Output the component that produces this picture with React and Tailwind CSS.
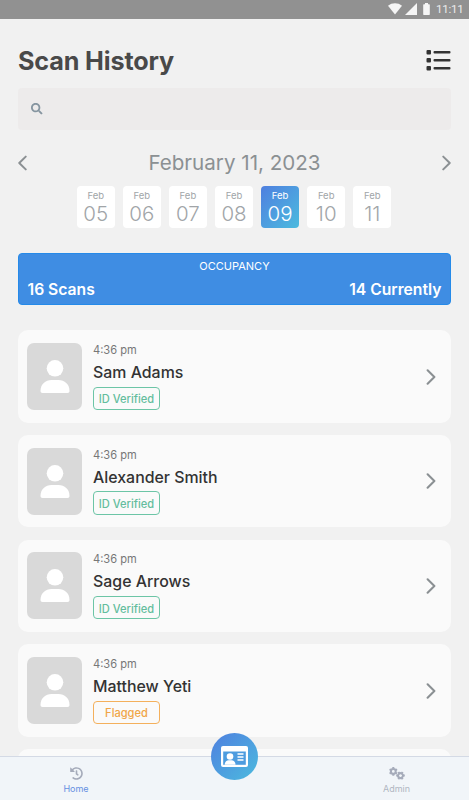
import React from "react";
import { FaSearch, FaHistory } from "react-icons/fa";

const days = ["05", "06", "07", "08", "09", "10", "11"];

const scans = [
  { name: "Sam Adams", flagged: false },
  { name: "Alexander Smith", flagged: false },
  { name: "Sage Arrows", flagged: false },
  { name: "Matthew Yeti", flagged: true },
];

function Chevron({ left = false, className = "" }) {
  return (
    <svg viewBox="0 0 10 17" className={className} fill="none" stroke="#8b9093" strokeWidth="2.2" strokeLinecap="round" strokeLinejoin="round">
      <path d={left ? "M8.6 1.4 1.4 8.5l7.2 7.1" : "M1.4 1.4l7.2 7.1-7.2 7.1"} />
    </svg>
  );
}

function Gear({ x, y, turn }) {
  return (
    <g transform={`translate(${x} ${y}) rotate(${turn})`}>
      <circle r="2.400" fill="none" stroke="#a5abba" strokeWidth="2" />
      {[0, 60, 120].map((a) => (
        <path key={a} d="M0-4.300V-2.700M0 2.700V4.300" transform={`rotate(${a})`} stroke="#a5abba" strokeWidth="2" />
      ))}
    </g>
  );
}

function StatusBar() {
  return (
    <div className="flex h-[18.5px] shrink-0 items-center justify-end bg-[#919191] pr-[6px]">
      <svg width="14" height="12" viewBox="0 0 14 12" className="mr-[3px]" fill="#f5f5f5">
        <path d="M0 2.8C4-.5 10-.5 14 2.8L7 11.6z" />
      </svg>
      <svg width="12" height="12" viewBox="0 0 12 12" className="mr-[6px]" fill="#f5f5f5">
        <path d="M12 0v12H0z" />
      </svg>
      <svg width="7" height="12" viewBox="0 0 7 12" className="mr-[6px]" fill="#f5f5f5">
        <path d="M2 0h3v1.2h1.2q.6 0 .6.8v9.2q0 .8-.6.8H.8q-.6 0-.6-.8V2q0-.8.6-.8H2z" />
      </svg>
      <span className="w-[27px] whitespace-nowrap font-[Roboto] text-[11.500px] leading-none tracking-[-0.200px] text-[#ececec]">11:11</span>
    </div>
  );
}

function ScanCard({ name, flagged }) {
  return (
    <div className="flex h-[92.3px] shrink-0 items-center rounded-[10px] bg-[#fafafa] pl-[9px] pr-[15.5px]">
      <div className="flex h-[67px] w-[55px] items-center justify-center rounded-[7px] bg-[#d9d9d9]">
        <svg width="30" height="33" viewBox="0 0 30 33" fill="white">
          <circle cx="15" cy="8.3" r="8.3" />
          <path d="M.5 31C.5 24 5.5 20 11.5 20h7c6 0 11 4 11 11 0 1.300-.8 2-2 2h-25c-1.200 0-2-.7-2-2z" />
        </svg>
      </div>
      <div className="ml-[11px] flex h-[67px] flex-1 flex-col items-start">
        <div className="h-[18px] text-[11.100px] leading-[14px] text-[#777]">4:36 pm</div>
        <div className="h-[25.500px] whitespace-nowrap text-[15.900px] font-medium leading-[23.500px] text-[#333]">{name}</div>
        <div
          className={
            flagged
              ? "flex h-[23.500px] w-[67px] items-center justify-center rounded-[4px] border border-[#f4b05c] pt-[3px] text-[11.100px] font-medium leading-none text-[#f0a648]"
              : "flex h-[23.500px] w-[67px] items-center justify-center rounded-[4px] border border-[#6cc5a6] pt-[3px] text-[11.100px] font-medium leading-none text-[#64bd9d]"
          }
        >
          {flagged ? "Flagged" : "ID Verified"}
        </div>
      </div>
      <Chevron className="h-[16px] w-[10px]" />
    </div>
  );
}

export default function App() {
  return (
    <div className="flex h-[800px] w-[469px] flex-col overflow-hidden bg-[#f1f1f1] font-['Inter',sans-serif]">
      <StatusBar />
      <main className="flex min-h-0 flex-1 flex-col overflow-hidden px-[18px]">
        <div className="mt-[24px] flex h-[36px] shrink-0 items-center justify-between">
          <h1 className="whitespace-nowrap pt-[2px] text-[25.200px] font-bold leading-none tracking-[-0.150px] text-[#494949]">Scan History</h1>
          <svg width="25" height="21" viewBox="0 0 25 21" fill="#333" className="-mt-[1px]">
            <rect x=".5" width="4.500" height="4.500" rx="1" />
            <rect x=".5" y="8" width="4.500" height="4.500" rx="1" />
            <rect x=".5" y="16" width="4.500" height="4.500" rx="1" />
            <rect x="7.500" y="1" width="17" height="2.600" rx="1" />
            <rect x="7.500" y="9" width="17" height="2.600" rx="1" />
            <rect x="7.500" y="17" width="17" height="2.600" rx="1" />
          </svg>
        </div>
        <div className="mt-[9px] flex h-[42.500px] shrink-0 items-center rounded-[4px] bg-[#edebeb] pl-[13px]">
          <FaSearch size={11.5} color="#8695a0" />
        </div>
        <div className="mt-[20px] flex h-[26px] shrink-0 items-center justify-between">
          <Chevron left className="h-[16px] w-[9px]" />
          <span className="whitespace-nowrap text-[20.600px] leading-none text-[#8b9093]">February 11, 2023</span>
          <Chevron className="h-[16px] w-[9px]" />
        </div>
        <div className="mt-[10px] flex h-[42px] shrink-0 justify-center gap-[8px] pr-[1px]">
          {days.map((day) => (
            <div
              key={day}
              className={
                day === "09"
                  ? "flex w-[38.100px] flex-col items-center rounded-[4px] bg-linear-to-br from-[#4f7fdf] to-[#4bbade] text-white"
                  : "flex w-[38.100px] flex-col items-center rounded-[4px] bg-white text-[#a1a5a8]"
              }
            >
              <span className="mt-[4px] text-[9.500px] leading-[11px]">Feb</span>
              <span className="mt-[2px] text-[20.500px] font-light leading-[22px]">{day}</span>
            </div>
          ))}
        </div>
        <div className="mt-[25px] h-[52px] shrink-0 rounded-[4px] border border-[#258ae9] bg-[#3f8de3] px-[8.500px] text-white">
          <div className="mt-[5px] text-center text-[11px] leading-[14px]">OCCUPANCY</div>
          <div className="mt-[7px] flex justify-between text-[15.700px] font-semibold leading-[20px]">
            <span>16 Scans</span>
            <span>14 Currently</span>
          </div>
        </div>
        <div className="mt-[25.400px] flex shrink-0 flex-col gap-[12.400px]">
          {scans.map((scan) => (
            <ScanCard key={scan.name} name={scan.name} flagged={scan.flagged} />
          ))}
          <div className="h-[92px] rounded-[10px] bg-[#fafafa]" />
        </div>
      </main>
      <nav className="flex h-[44px] shrink-0 border-t border-[#d4dae5] bg-[#f1f5f9] text-[9px] leading-[11px]">
        <div className="flex w-[152px] flex-col items-center pt-[10px] text-[#6590e2]">
          <FaHistory size={13} color="#a5abba" />
          <span className="mt-[3px]">Home</span>
        </div>
        <div className="-mt-[24px] ml-[59px] flex h-[47px] w-[47px] items-center justify-center rounded-full bg-linear-to-br from-[#4f7fdf] to-[#4bbade]">
          <svg width="27" height="21" viewBox="0 0 27 21">
            <rect width="27" height="21" rx="2" fill="white" />
            <path d="M2.200 5.500h22.600v13.300H2.200z" fill="#4d9cdf" />
            <circle cx="9" cy="10.500" r="3.300" fill="white" />
            <path d="M3.700 18.800c0-3 1.700-4.600 4-4.600h2.800c2.300 0 4 1.600 4 4.600z" fill="white" />
            <path d="M16.500 8h6M16.500 11h6M16.500 14h6" stroke="white" strokeWidth="1.500" />
          </svg>
        </div>
        <div className="ml-auto flex w-[145px] flex-col items-center pt-[10px] text-[#b0b5c2]">
          <svg width="16" height="13" viewBox="0 0 16 13">
            <Gear x={4.3} y={4.4} turn={0} />
            <Gear x={11.5} y={8.6} turn={30} />
          </svg>
          <span className="mt-[3px]">Admin</span>
        </div>
      </nav>
    </div>
  );
}
